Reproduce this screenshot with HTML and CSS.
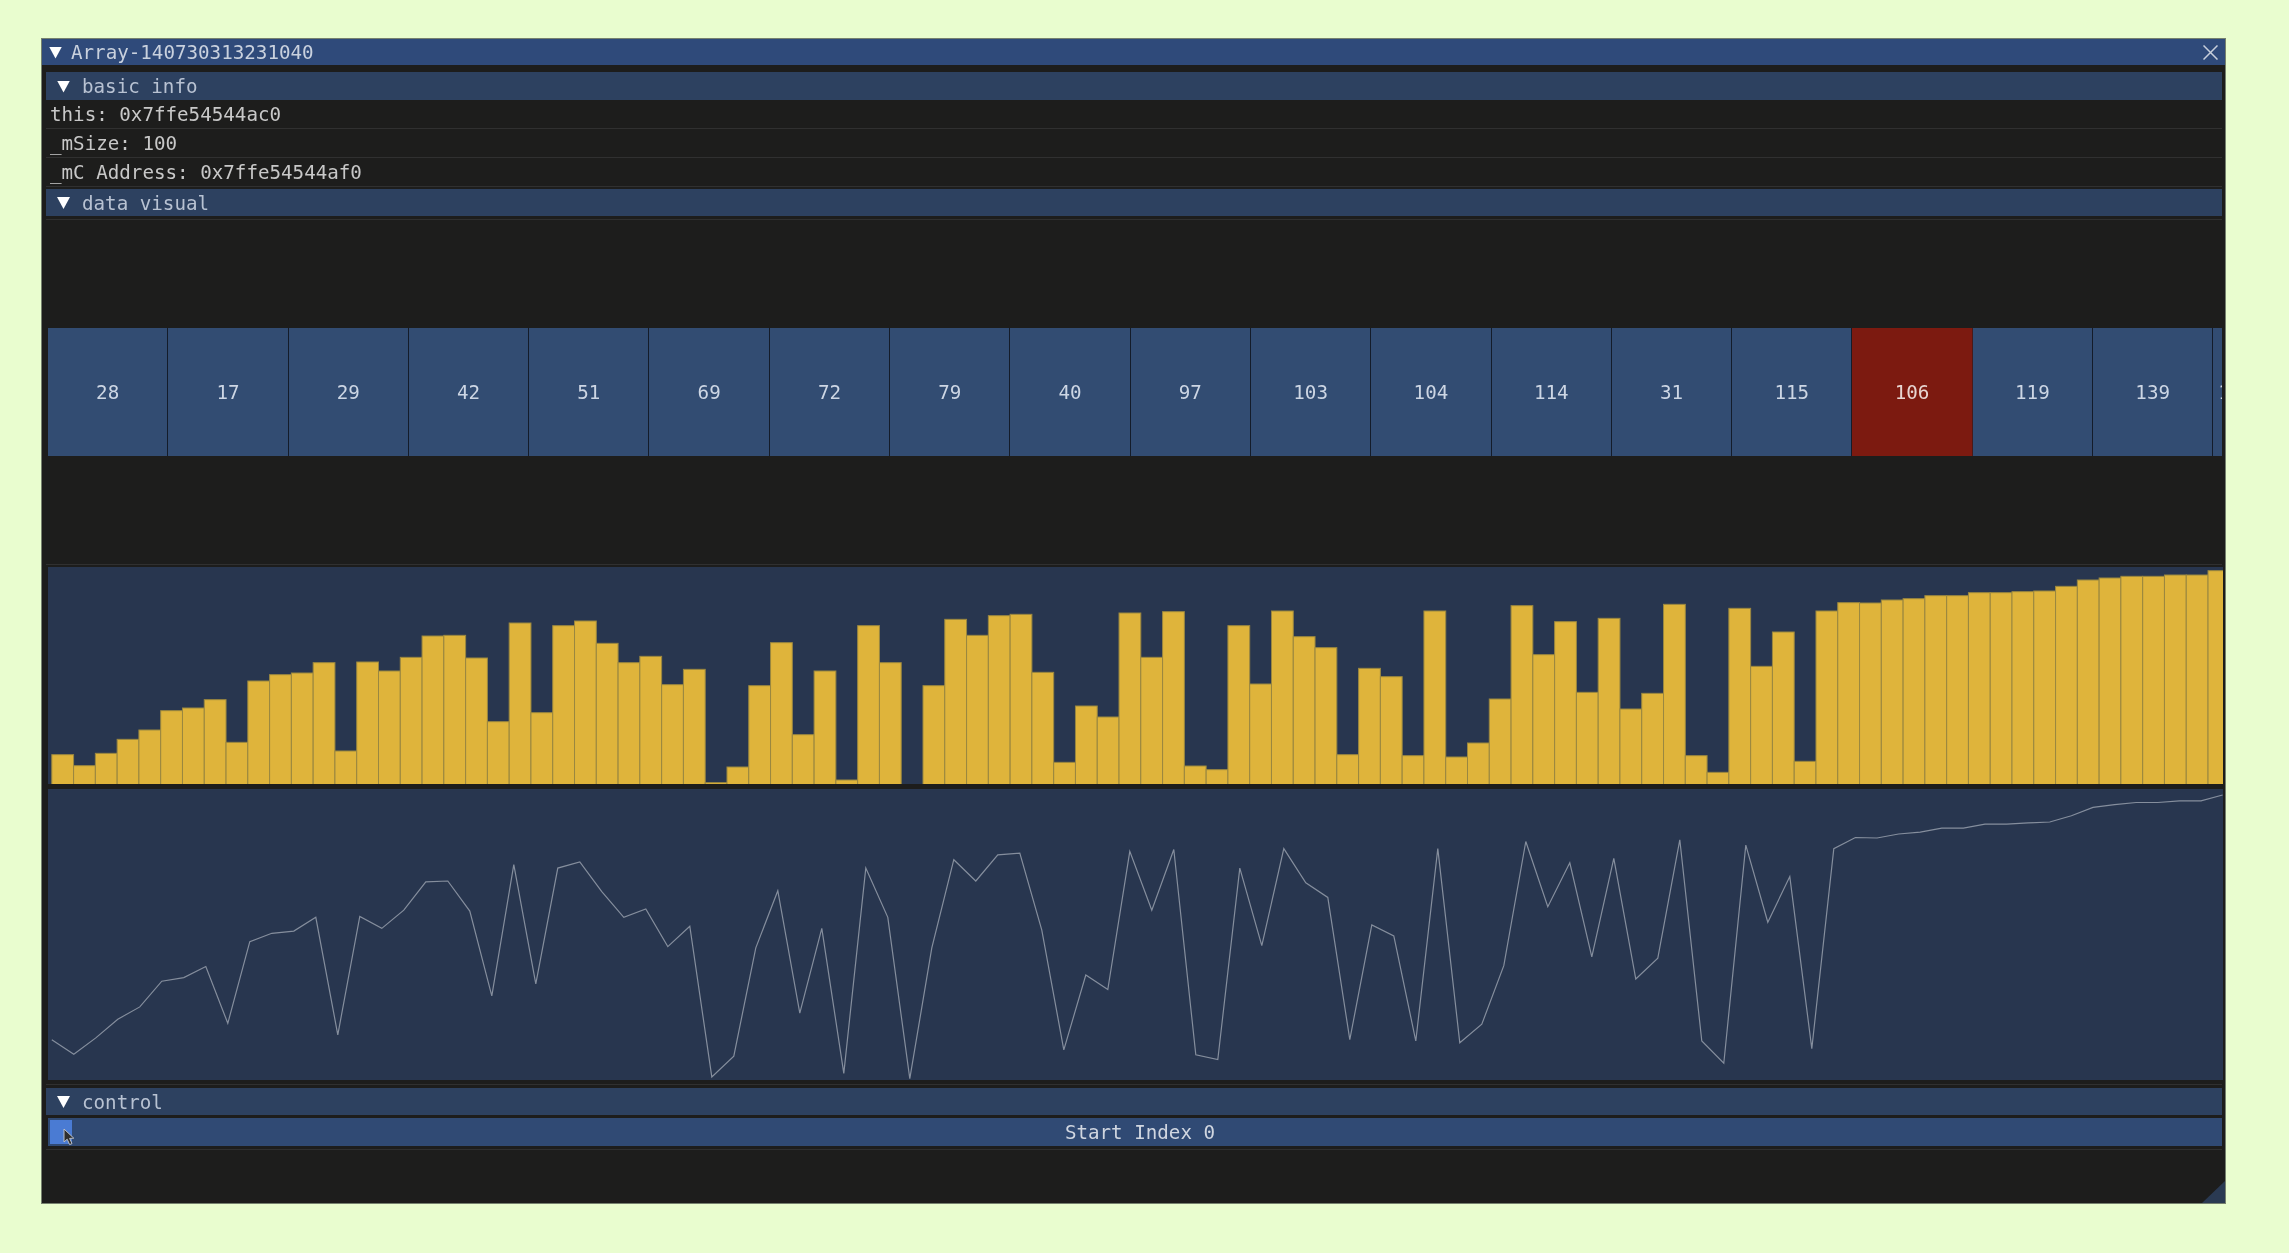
FILE: index.html
```html
<!DOCTYPE html>
<html>
<head>
  <title>Array-140730313231040</title>
  <link rel="stylesheet" href="styles.css">
</head>
<body>
  <div class="window">
    <div class="title-bar">
      <span class="arrow arrow-title"></span>
      <span class="title-text">Array-140730313231040</span>
      <svg class="close-icon" viewBox="0 0 15 15" width="15" height="15">
        <path d="M0.5 0.5L14.5 14.5M14.5 0.5L0.5 14.5" />
      </svg>
    </div>
    <div class="content">
      <div class="header header-first"><span class="arrow"></span>basic info</div>
      <div class="row">this: 0x7ffe54544ac0</div>
      <div class="row">_mSize: 100</div>
      <div class="row">_mC Address: 0x7ffe54544af0</div>

      <div class="header header-visual"><span class="arrow"></span>data visual</div>
      <div class="strip-wrap">
        <div class="strip">
          <div class="cell">28</div>
          <div class="cell">17</div>
          <div class="cell">29</div>
          <div class="cell">42</div>
          <div class="cell">51</div>
          <div class="cell">69</div>
          <div class="cell">72</div>
          <div class="cell">79</div>
          <div class="cell">40</div>
          <div class="cell">97</div>
          <div class="cell">103</div>
          <div class="cell">104</div>
          <div class="cell">114</div>
          <div class="cell">31</div>
          <div class="cell">115</div>
          <div class="cell cell-active">106</div>
          <div class="cell">119</div>
          <div class="cell">139</div>
          <div class="cell-cut">1</div>
        </div>
      </div>
      <svg id="bars" class="plot plot-bars"></svg>
      <svg id="line" class="plot plot-line"></svg>
      <div class="rule"></div>

      <div class="header header-control"><span class="arrow"></span>control</div>
      <div class="slider">
        <span class="slider-grab"></span>
        <span class="slider-text">Start Index 0</span>
      </div>
      <div class="rule"></div>
    </div>
    <span class="resize-grip"></span>
    <svg class="cursor" viewBox="0 0 12 18" width="12" height="18">
      <path d="M1 1L1 14L4.2 11.2L6.6 16.6L9 15.6L6.6 10.4L10.8 10.2Z" />
    </svg>
  </div>
  <script src="chart.js"></script>
</body>
</html>
```

FILE: styles.css
```css
* {
  box-sizing: border-box;
}

body {
  margin: 0;
  padding: 38px 0 0 41px;
  height: 1253px;
  overflow: hidden;
  background-color: #e9fdcf;
  font-family: "DejaVu Sans Mono", "Liberation Mono", monospace;
  font-size: 19.2px;
  color: #c8c8c8;
}

.window {
  position: relative;
  width: 2185px;
  height: 1166px;
  background-color: #1d1d1c;
  border: 1px solid #76816f;
  filter: blur(0.45px);
}

.title-bar {
  display: flex;
  align-items: center;
  height: 26px;
  padding: 1px 7px 0;
  background-color: #2f4a7a;
  color: #c9d1de;
}

.title-text {
  flex: 1;
}

.close-icon path {
  fill: none;
  stroke: #c8cfdb;
  stroke-width: 1.5;
}

.arrow {
  flex: none;
  width: 13px;
  height: 12px;
  margin-right: 12px;
  background-color: #fff;
  clip-path: polygon(0 0, 100% 0, 50% 100%);
}

.arrow-title {
  margin-right: 9px;
}

.content {
  margin: 7px 3px 0 4px;
}

.header {
  display: flex;
  align-items: center;
  height: 27px;
  padding: 1px 0 0 11px;
  background-color: #2d4160;
  color: #b8c2d2;
}

.header-first {
  height: 28px;
}

.header-visual {
  margin-top: 2px;
}

.header-control {
  margin-top: 3px;
}

.row {
  height: 29px;
  padding-left: 4px;
  line-height: 30px;
  border-bottom: 1px solid #303030;
}

.strip-wrap {
  margin-top: 3px;
  padding: 108px 0;
  border-top: 1px solid #303030;
  border-bottom: 1px solid #303030;
}

.strip {
  display: flex;
  height: 128px;
  margin-left: 2px;
}

.cell {
  flex: none;
  width: 120.3px;
  display: flex;
  align-items: center;
  justify-content: center;
  background-color: #324c72;
  border-right: 1px solid #141c2a;
  color: #cdd6e4;
}

.cell-active {
  background-color: #7c1a10;
  border-right-color: #4a1a18;
  color: #e8d6d2;
}

.cell-cut {
  flex: 1;
  min-width: 0;
  overflow: hidden;
  display: flex;
  align-items: center;
  padding-left: 5px;
  background-color: #324c72;
  color: #cdd6e4;
}

.plot {
  display: block;
  width: 2175px;
  margin-left: 2px;
  background-color: #28364f;
}

.plot-bars {
  height: 217px;
  margin-top: 2px;
}

.plot-line {
  height: 291px;
  margin-top: 5px;
  margin-bottom: 4px;
}

.plot-bars rect {
  fill: #dfb43b;
  stroke: #9a8740;
  stroke-width: 1;
}

.plot-line polyline {
  fill: none;
  stroke: #858e9d;
  stroke-width: 1.2;
}

.rule {
  border-top: 1px solid #303030;
}

.slider {
  display: flex;
  align-items: center;
  height: 28px;
  margin: 3px 0 3px 2px;
  padding: 0 2px;
  background-color: #304a74;
}

.slider-grab {
  flex: none;
  width: 22px;
  height: 24px;
  background-color: #4a7bd3;
}

.slider-text {
  flex: 1;
  text-align: center;
  padding: 1px 22px 0 10px;
  color: #d0d6e0;
}

.resize-grip {
  position: absolute;
  right: 0;
  bottom: 0;
  width: 23px;
  height: 22px;
  background-color: #2a3a52;
  clip-path: polygon(100% 0, 100% 100%, 0 100%);
}

.cursor {
  position: absolute;
  left: 21px;
  top: 1089px;
}

.cursor path {
  fill: #2e2e2e;
  stroke: #b9bec6;
  stroke-width: 1;
}
```

FILE: chart.js
```js
// bar heights read off the plot, in 1/3 px
const samples = [
  88, 55, 92, 134, 162, 220, 228, 253, 125, 309,
  328, 333, 364, 99, 366, 339, 380, 444, 446, 378,
  187, 483, 214, 475, 489, 422, 364, 383, 298, 344,
  4, 51, 295, 424, 148, 339, 12, 475, 364, 0,
  295, 494, 446, 505, 509, 335, 65, 234, 201, 513,
  380, 517, 54, 43, 475, 300, 519, 442, 409, 88,
  347, 322, 85, 519, 81, 123, 255, 535, 388, 487,
  275, 497, 225, 272, 539, 85, 35, 527, 353, 456,
  68, 519, 544, 543, 552, 556, 565, 565, 574, 574,
  577, 579, 593, 612, 618, 623, 623, 627, 627, 640
];

const SVG_NS = 'http://www.w3.org/2000/svg';
const OFFSET_X = 3.8;
const BAR_STEP = 21.78;

function lineX(i) {
  // the line runs a little wider than the bars, then catches up near the end
  return i <= 81 ? OFFSET_X + i * 22 : OFFSET_X + 81 * 22 + (i - 81) * 21.6;
}

function drawBars() {
  const svg = document.getElementById('bars');
  samples.forEach((value, i) => {
    if (value === 0) return;
    const height = value / 3;
    const rect = document.createElementNS(SVG_NS, 'rect');
    rect.setAttribute('x', OFFSET_X + i * BAR_STEP);
    rect.setAttribute('y', 217 - height);
    rect.setAttribute('width', BAR_STEP);
    rect.setAttribute('height', height + 2);
    svg.appendChild(rect);
  });
}

function drawLine() {
  const svg = document.getElementById('line');
  const points = samples.map((value, i) => {
    const y = 289.7 - 0.4433 * value;
    return `${lineX(i).toFixed(1)},${y.toFixed(1)}`;
  });
  const line = document.createElementNS(SVG_NS, 'polyline');
  line.setAttribute('points', points.join(' '));
  svg.appendChild(line);
}

drawBars();
drawLine();
```
